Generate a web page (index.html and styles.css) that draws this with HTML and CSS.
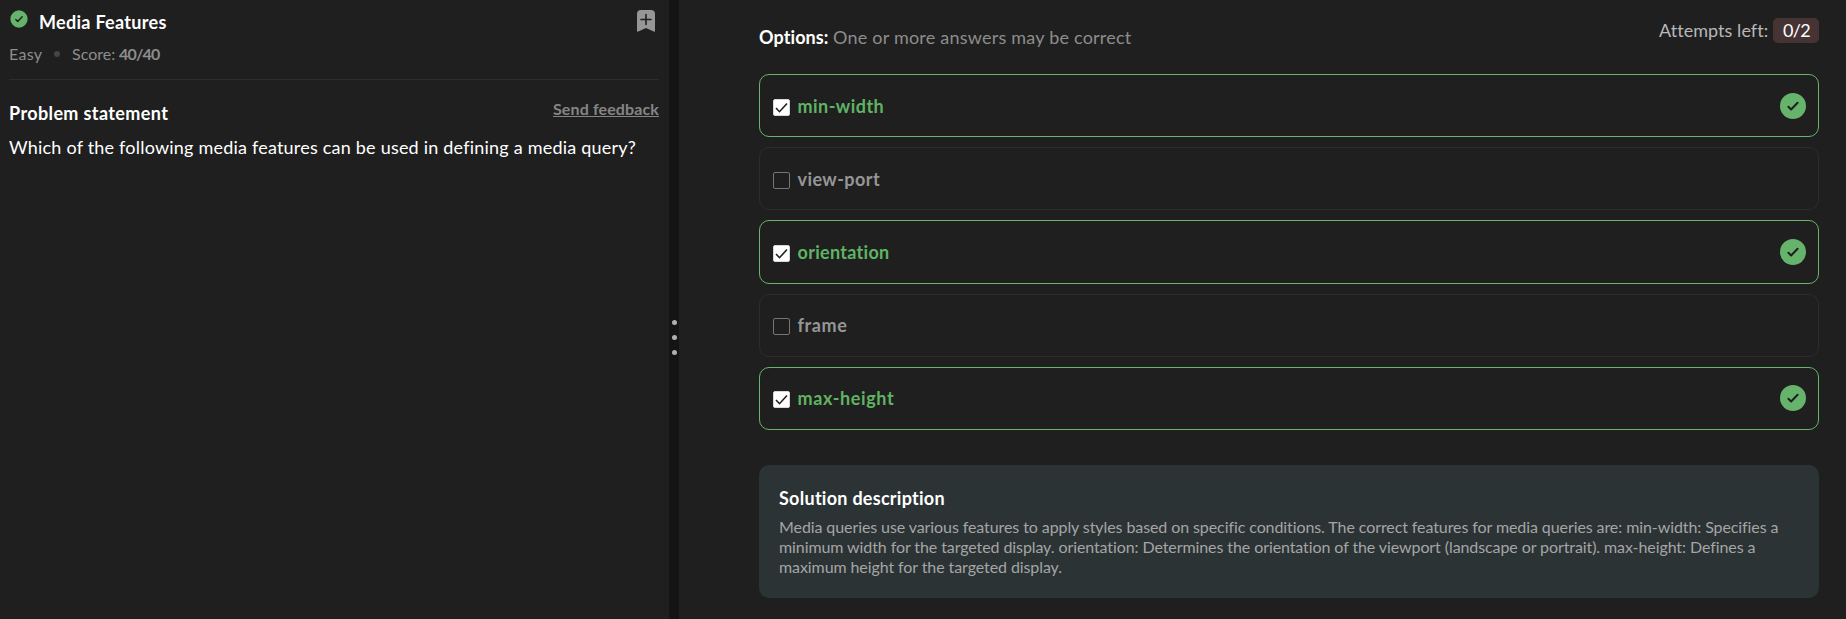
FILE: index.html
```html
<!DOCTYPE html>
<html lang="en">
<head>
<meta charset="utf-8">
<title>Media Features</title>
<link rel="stylesheet" href="styles.css">
</head>
<body>
<div class="app">
  <section class="problem">
    <header class="problem-header">
      <div class="title-row">
        <svg class="status" viewBox="0 0 26 26"><circle cx="13" cy="13" r="12.500"/><path d="M8.400 13.800l2.700 2.700 6.500-6.700"/></svg>
        <h1 class="title">Media Features</h1>
        <svg class="bookmark" viewBox="0 0 18 22"><path class="bookmark-shape" d="M4 0h10a4 4 0 0 1 4 4v16.800q0 1.300-1.300.8L9 18l-7.700 3.600Q0 22.100 0 20.800V4a4 4 0 0 1 4-4z"/><path class="bookmark-plus" d="M9 4.500v10M4 9.500h10"/></svg>
      </div>
      <div class="meta"><span class="level">Easy</span><i class="dot"></i><span class="score">Score:</span><b class="points">40/40</b></div>
    </header>
    <div class="statement-row">
      <h2 class="statement-title">Problem statement</h2>
      <a class="feedback">Send feedback</a>
    </div>
    <p class="question">Which of the following media features can be used in defining a media query?</p>
  </section>
  <div class="gutter"><i></i><i></i><i></i></div>
  <main class="answers">
    <div class="answers-header">
      <p class="hint"><b class="hint-label">Options:</b><span class="hint-text">One or more answers may be correct</span></p>
      <p class="attempts"><span class="attempts-label">Attempts left:</span><span class="badge">0/2</span></p>
    </div>
    <div class="options">
      <div class="option correct">
        <svg class="box" viewBox="0 0 17 17"><rect x=".5" y=".5" width="16" height="16" rx="1.500"/><path d="M3 9l3.500 3.700L14 4.500"/></svg>
        <span class="label label-min">min-width</span>
        <svg class="tick" viewBox="0 0 26 26"><circle cx="13" cy="13" r="13"/><path d="M8.400 13.800l2.700 2.700 6.500-6.700"/></svg>
      </div>
      <div class="option">
        <svg class="box" viewBox="0 0 17 17"><rect x=".5" y=".5" width="16" height="16" rx="1.500"/></svg>
        <span class="label label-view">view-port</span>
      </div>
      <div class="option correct">
        <svg class="box" viewBox="0 0 17 17"><rect x=".5" y=".5" width="16" height="16" rx="1.500"/><path d="M3 9l3.500 3.700L14 4.500"/></svg>
        <span class="label label-orientation">orientation</span>
        <svg class="tick" viewBox="0 0 26 26"><circle cx="13" cy="13" r="13"/><path d="M8.400 13.800l2.700 2.700 6.500-6.700"/></svg>
      </div>
      <div class="option">
        <svg class="box" viewBox="0 0 17 17"><rect x=".5" y=".5" width="16" height="16" rx="1.500"/></svg>
        <span class="label label-frame">frame</span>
      </div>
      <div class="option correct">
        <svg class="box" viewBox="0 0 17 17"><rect x=".5" y=".5" width="16" height="16" rx="1.500"/><path d="M3 9l3.500 3.700L14 4.500"/></svg>
        <span class="label label-max">max-height</span>
        <svg class="tick" viewBox="0 0 26 26"><circle cx="13" cy="13" r="13"/><path d="M8.400 13.800l2.700 2.700 6.500-6.700"/></svg>
      </div>
    </div>
    <section class="solution">
      <h2 class="solution-title">Solution description</h2>
      <p class="solution-text">Media queries use various features to apply styles based on specific conditions. The correct features for media queries are: min-width: Specifies a minimum width for the targeted display. orientation: Determines the orientation of the viewport (landscape or portrait). max-height: Defines a maximum height for the targeted display.</p>
    </section>
  </main>
</div>
</body>
</html>
```

FILE: styles.css
```css
* { box-sizing: border-box; }
body {
  margin: 0;
  background: #1f1f1f;
  color: #fff;
  font: 18px/24px Lato, sans-serif;
}
h1, h2, p { margin: 0; font-size: 18px; line-height: 24px; }
svg { display: block; flex: none; }

.app { display: flex; height: 619px; overflow: hidden; }

/* Left pane */
.problem { width: 669px; flex: none; padding: 9px 10px 0 9px; }
.problem-header { height: 71px; border-bottom: 1px solid #2d2d2d; }
.title-row { display: flex; align-items: flex-start; height: 24px; }
.status { width: 18px; height: 18px; margin: 1px 11px 0 1px; }
.title { flex: 1; margin-top: 1px; letter-spacing: .3px; }
.bookmark { width: 18px; height: 22px; margin: 1px 4px 0 0; }
.bookmark-shape { fill: #969696; }
.bookmark-plus { fill: none; stroke: #1f1f1f; stroke-width: 1.6; stroke-linecap: round; }
.meta {
  display: flex;
  align-items: center;
  margin-top: 11px;
  font-size: 16px;
  line-height: 20px;
  color: #8d8d8d;
}
.level { width: 45px; letter-spacing: .3px; }
.dot { width: 6px; height: 6px; margin-right: 12px; border-radius: 50%; background: #454545; }
.score { width: 47px; letter-spacing: 0; }
.points { letter-spacing: -.8px; }
.statement-row { display: flex; justify-content: space-between; align-items: flex-start; height: 24px; margin-top: 20px; }
.statement-title { margin-top: 1px; letter-spacing: .38px; }
.feedback {
  margin-top: -1px;
  font-size: 16px;
  line-height: 20px;
  font-weight: 700;
  letter-spacing: .12px;
  color: #858585;
  text-decoration: underline;
}
.question { margin-top: 11px; letter-spacing: .21px; white-space: nowrap; }

/* Resizer */
.gutter {
  width: 10px;
  flex: none;
  display: flex;
  flex-direction: column;
  align-items: center;
  gap: 10px;
  padding: 320px 0 0 1px;
  background: #141414;
}
.gutter i { width: 5px; height: 5px; border-radius: 50%; background: #b0b0b0; }

/* Right pane */
.answers { flex: 1; padding: 18px 27px 0 80px; }
.answers-header { display: flex; justify-content: space-between; align-items: flex-start; height: 56px; }
.hint { display: flex; margin-top: 7px; }
.hint-label { width: 74px; letter-spacing: .1px; }
.hint-text { color: #8d8d8d; letter-spacing: .22px; }
.attempts { display: flex; color: #b8b8b8; }
.attempts-label { width: 114px; letter-spacing: .05px; }
.badge {
  width: 46px;
  height: 25px;
  padding-left: 1px;
  border-radius: 5px;
  background: #463434;
  color: #fff;
  text-align: center;
  letter-spacing: -.6px;
}
.options { display: grid; gap: 10px; }
.option {
  display: flex;
  align-items: center;
  height: 63.2px;
  padding: 0 12px 0 13px;
  border: 1px solid #2c2c2c;
  border-radius: 10px;
  color: #969696;
  font-weight: 700;
}
.option.correct { border-color: #66b56a; color: #5fb463; }
.box { width: 17px; height: 17px; margin: 3px 7.5px 0 0; }
.box rect { fill: none; stroke: #757575; }
.correct .box rect { fill: #fff; stroke: #d8d8d8; }
.box path { fill: none; stroke: #1f1f1f; stroke-width: 1.6; }
.label { flex: 1; }
.label-min { letter-spacing: .45px; }
.label-view { letter-spacing: .43px; }
.label-orientation { letter-spacing: .3px; }
.label-frame { letter-spacing: .6px; }
.label-max { letter-spacing: .62px; }
.tick { width: 26px; height: 26px; }
.tick circle, .status circle { fill: #66b36b; }
.tick path, .status path {
  fill: none;
  stroke: #1f1f1f;
  stroke-width: 2;
  stroke-linecap: round;
  stroke-linejoin: round;
}
.solution {
  height: 133px;
  margin-top: 35px;
  padding: 21px 20px 0;
  border-radius: 10px;
  background: #2b3335;
}
.solution-title { letter-spacing: .27px; }
.solution-text {
  margin-top: 7px;
  font-size: 16px;
  line-height: 20px;
  letter-spacing: -.09px;
  color: #a5a5a5;
}
```
